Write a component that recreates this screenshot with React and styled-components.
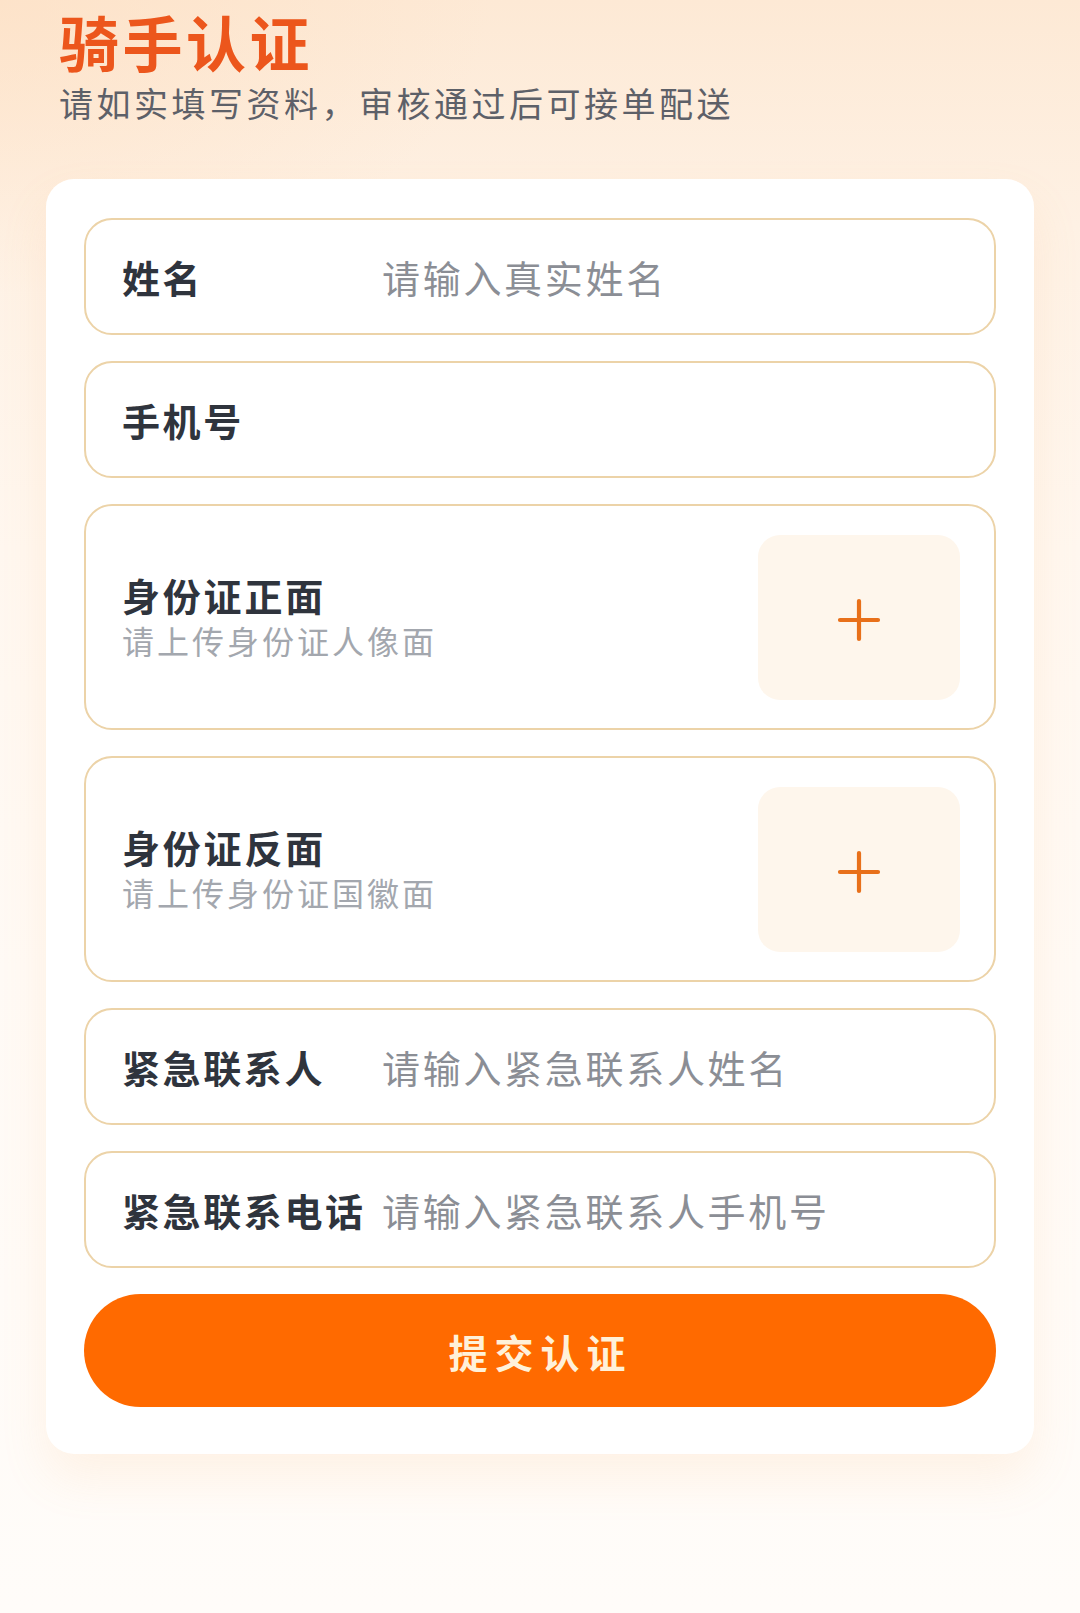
import * as React from "react"
import styled, { createGlobalStyle } from "styled-components"

const GlobalStyle = createGlobalStyle`
    * { box-sizing: border-box; }
    body {
        margin: 0;
        font-family: "Noto Sans CJK SC", "Noto Sans", sans-serif;
        background: #fffcf8;
    }
`

const Page = styled.div`
    min-height: 1613px;
    padding: 8px 0 80px;
    background:
        radial-gradient(ellipse 700px 420px at 0% 0%, rgba(253, 222, 192, 0.55), transparent 70%),
        linear-gradient(180deg, #fde9d5 0%, #fef1e4 14%, #fff7ef 34%, #fffaf5 60%, #fffcf9 100%);
`

const Header = styled.header`
    padding: 0 59px;
`

const Title = styled.h1`
    margin: 0;
    font-size: 60px;
    line-height: 66px;
    font-weight: 700;
    letter-spacing: 3.5px;
    color: #ec561c;
`

const Subtitle = styled.p`
    margin: 9px 0 0;
    font-size: 34px;
    line-height: 40px;
    letter-spacing: 3.5px;
    color: #5d6068;
`

const Card = styled.section`
    margin: 56px 46px 0;
    padding: 39px 38px 47px;
    background: #ffffff;
    border-radius: 28px;
    box-shadow: 0 24px 48px rgba(250, 170, 100, 0.12);
    display: flex;
    flex-direction: column;
    gap: 26px;
`

const Field = styled.label`
    display: flex;
    align-items: center;
    height: ${p => (p.tall ? "226px" : "117px")};
    padding: 0 34px 0 36px;
    border: 2px solid #ecd3a8;
    border-radius: 28px;
    background: #ffffff;
`

const Label = styled.span`
    flex: 0 0 260px;
    font-size: 38px;
    line-height: 44px;
    font-weight: 700;
    letter-spacing: 2.6px;
    color: #2f343d;
    white-space: nowrap;
`

const Input = styled.input`
    flex: 1;
    min-width: 0;
    border: none;
    outline: none;
    background: transparent;
    padding: 0;
    font-family: inherit;
    font-size: 38px;
    line-height: 44px;
    letter-spacing: 2.7px;
    color: #2f343d;

    &::placeholder {
        color: #8b8e95;
    }
`

const UploadText = styled.div`
    flex: 1;
    display: flex;
    flex-direction: column;
    gap: 1px;
`

const UploadTitle = styled.span`
    font-size: 38px;
    line-height: 44px;
    font-weight: 700;
    letter-spacing: 2.8px;
    color: #2f343d;
`

const UploadHint = styled.span`
    font-size: 32px;
    line-height: 44px;
    letter-spacing: 3px;
    color: #a3a7ae;
`

const UploadBox = styled.div`
    width: 202px;
    height: 165px;
    border-radius: 22px;
    background: #fef6ec;
    display: flex;
    align-items: center;
    justify-content: center;
    cursor: pointer;
`

const SubmitButton = styled.button`
    height: 113px;
    border: none;
    border-radius: 57px;
    background: #ff6a00;
    color: #fff1d9;
    font-family: inherit;
    font-size: 39px;
    font-weight: 700;
    letter-spacing: 7px;
    padding-left: 7px;
    cursor: pointer;
`

function Plus() {
    return (
        <svg width="44" height="44" viewBox="0 0 44 44" style={{ marginTop: 6 }}>
            <path d="M22 3v38M3 22h38" stroke="#e8701a" strokeWidth="4.2" strokeLinecap="round" />
        </svg>
    )
}

function TextField({ label, placeholder }) {
    return (
        <Field>
            <Label>{label}</Label>
            <Input type="text" placeholder={placeholder} />
        </Field>
    )
}

function UploadField({ title, hint }) {
    return (
        <Field tall>
            <UploadText>
                <UploadTitle>{title}</UploadTitle>
                <UploadHint>{hint}</UploadHint>
            </UploadText>
            <UploadBox>
                <Plus />
            </UploadBox>
        </Field>
    )
}

export default function App() {
    return <>
        <GlobalStyle />
        <Page>
            <Header>
                <Title>骑手认证</Title>
                <Subtitle>请如实填写资料，审核通过后可接单配送</Subtitle>
            </Header>
            <Card>
                <TextField label="姓名" placeholder="请输入真实姓名" />
                <TextField label="手机号" placeholder="" />
                <UploadField title="身份证正面" hint="请上传身份证人像面" />
                <UploadField title="身份证反面" hint="请上传身份证国徽面" />
                <TextField label="紧急联系人" placeholder="请输入紧急联系人姓名" />
                <TextField label="紧急联系电话" placeholder="请输入紧急联系人手机号" />
                <SubmitButton type="button">提交认证</SubmitButton>
            </Card>
        </Page>
    </>
}
